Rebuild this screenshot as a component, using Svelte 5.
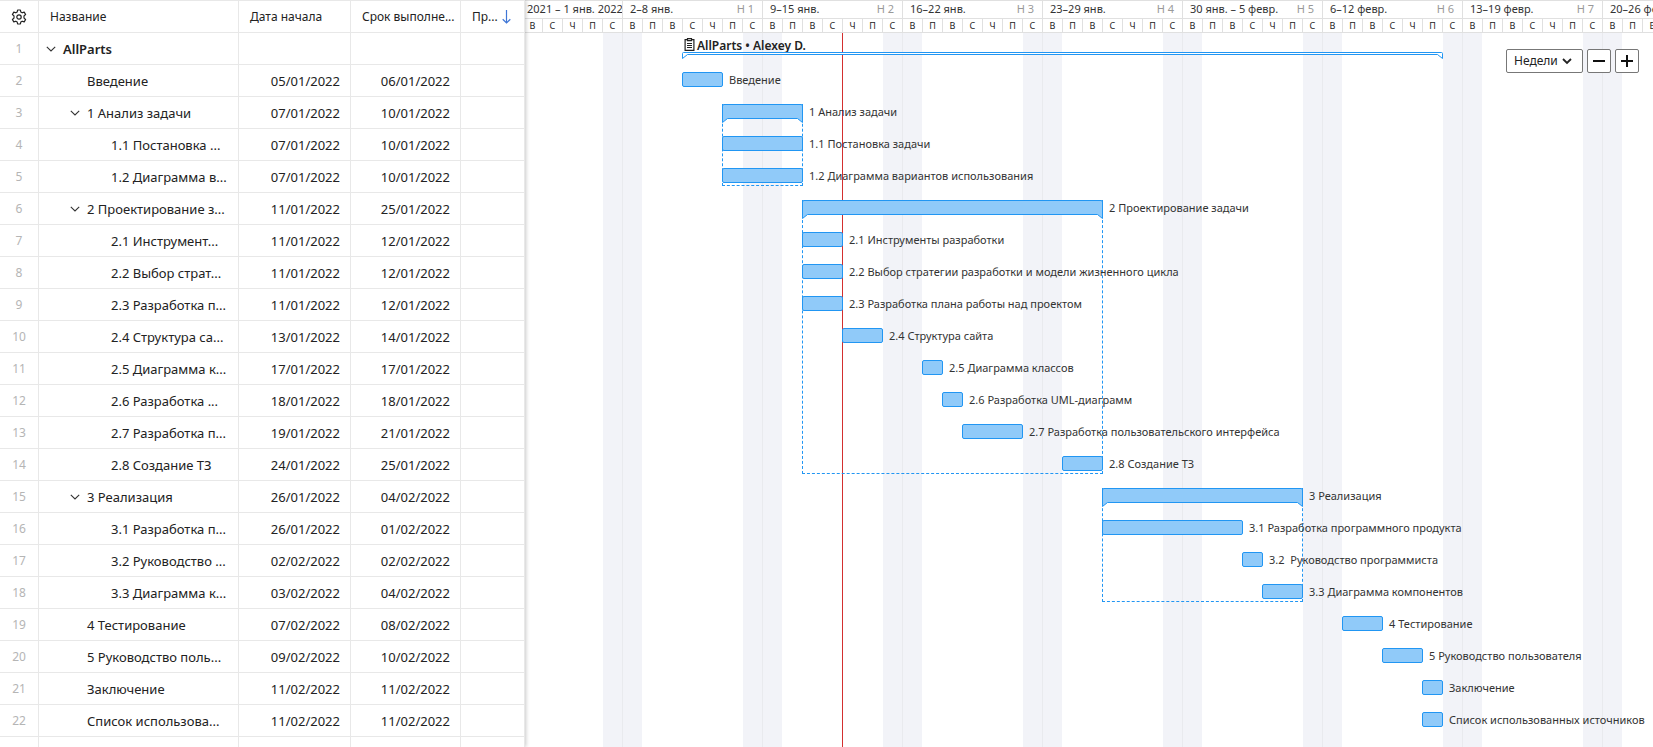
<script>
  const DAY = 20;

  const weeks = [
    { label: '2021 – 1 янв. 2022', number: '', days: 5 },
    { label: '2–8 янв.', number: 'Н 1', days: 7 },
    { label: '9–15 янв.', number: 'Н 2', days: 7 },
    { label: '16–22 янв.', number: 'Н 3', days: 7 },
    { label: '23–29 янв.', number: 'Н 4', days: 7 },
    { label: '30 янв. – 5 февр.', number: 'Н 5', days: 7 },
    { label: '6–12 февр.', number: 'Н 6', days: 7 },
    { label: '13–19 февр.', number: 'Н 7', days: 7 },
    { label: '20–26 февр.', number: 'Н 8', days: 7 }
  ];
  const letters = ['В', 'П', 'В', 'С', 'Ч', 'П', 'С'];
  const weekDays = (week) => letters.slice(7 - week.days);

  // start and span are counted in days from the left edge of the timeline
  const tasks = [
    { level: 0, name: 'AllParts', label: 'AllParts • Alexey D.', from: '', to: '', start: 8, span: 38, project: true, open: true },
    { level: 1, name: 'Введение', label: 'Введение', from: '05/01/2022', to: '06/01/2022', start: 8, span: 2 },
    { level: 1, name: '1 Анализ задачи', label: '1 Анализ задачи', from: '07/01/2022', to: '10/01/2022', start: 10, span: 4, children: 2, open: true },
    { level: 2, name: '1.1 Постановка ...', label: '1.1 Постановка задачи', from: '07/01/2022', to: '10/01/2022', start: 10, span: 4 },
    { level: 2, name: '1.2 Диаграмма в...', label: '1.2 Диаграмма вариантов использования', from: '07/01/2022', to: '10/01/2022', start: 10, span: 4 },
    { level: 1, name: '2 Проектирование з...', label: '2 Проектирование задачи', from: '11/01/2022', to: '25/01/2022', start: 14, span: 15, children: 8, open: true },
    { level: 2, name: '2.1 Инструмент...', label: '2.1 Инструменты разработки', from: '11/01/2022', to: '12/01/2022', start: 14, span: 2 },
    { level: 2, name: '2.2 Выбор страт...', label: '2.2 Выбор стратегии разработки и модели жизненного цикла', from: '11/01/2022', to: '12/01/2022', start: 14, span: 2 },
    { level: 2, name: '2.3 Разработка п...', label: '2.3 Разработка плана работы над проектом', from: '11/01/2022', to: '12/01/2022', start: 14, span: 2 },
    { level: 2, name: '2.4 Структура са...', label: '2.4 Структура сайта', from: '13/01/2022', to: '14/01/2022', start: 16, span: 2 },
    { level: 2, name: '2.5 Диаграмма к...', label: '2.5 Диаграмма классов', from: '17/01/2022', to: '17/01/2022', start: 20, span: 1 },
    { level: 2, name: '2.6 Разработка ...', label: '2.6 Разработка UML-диаграмм', from: '18/01/2022', to: '18/01/2022', start: 21, span: 1 },
    { level: 2, name: '2.7 Разработка п...', label: '2.7 Разработка пользовательского интерфейса', from: '19/01/2022', to: '21/01/2022', start: 22, span: 3 },
    { level: 2, name: '2.8 Создание ТЗ', label: '2.8 Создание ТЗ', from: '24/01/2022', to: '25/01/2022', start: 27, span: 2 },
    { level: 1, name: '3 Реализация', label: '3 Реализация', from: '26/01/2022', to: '04/02/2022', start: 29, span: 10, children: 3, open: true },
    { level: 2, name: '3.1 Разработка п...', label: '3.1 Разработка программного продукта', from: '26/01/2022', to: '01/02/2022', start: 29, span: 7 },
    { level: 2, name: '3.2 Руководство ...', label: '3.2  Руководство программиста', from: '02/02/2022', to: '02/02/2022', start: 36, span: 1 },
    { level: 2, name: '3.3 Диаграмма к...', label: '3.3 Диаграмма компонентов', from: '03/02/2022', to: '04/02/2022', start: 37, span: 2 },
    { level: 1, name: '4 Тестирование', label: '4 Тестирование', from: '07/02/2022', to: '08/02/2022', start: 41, span: 2 },
    { level: 1, name: '5 Руководство поль...', label: '5 Руководство пользователя', from: '09/02/2022', to: '10/02/2022', start: 43, span: 2 },
    { level: 1, name: 'Заключение', label: 'Заключение', from: '11/02/2022', to: '11/02/2022', start: 45, span: 1 },
    { level: 1, name: 'Список использова...', label: 'Список использованных источников', from: '11/02/2022', to: '11/02/2022', start: 45, span: 1 }
  ];

  const summaryPath = (w) =>
    `M.5 18.5V2Q.5 .5 2 .5H${w - 1}Q${w + 0.5} .5 ${w + 0.5} 2V18.5L${w - 4.5} 14.5H5.5Z`;
  const projectPath = (w) =>
    `M.5 6.5V1.5Q.5 .5 1.5 .5H${w - 0.5}Q${w + 0.5} .5 ${w + 0.5} 1.5V6.5L${w - 4.5} 2.5H5.5Z`;
</script>

<main class="gantt">
  <section class="sheet">
    <table>
      <colgroup>
        <col class="c-num" /><col class="c-name" /><col class="c-from" /><col class="c-to" /><col class="c-more" />
      </colgroup>
      <thead>
        <tr>
          <th class="gear">
            <button aria-label="Настройки">
              <svg width="16" height="16" viewBox="0 0 16 16" fill="none" stroke="#222" stroke-width="1.2" stroke-linejoin="round">
                <path d="M6.6 1h2.8l.4 2 1.4.8 2-.7 1.4 2.4-1.6 1.4v2.2l1.6 1.4-1.4 2.4-2-.7-1.4.8-.4 2H6.6l-.4-2-1.4-.8-2 .7-1.4-2.4L3 9.1V6.9L1.4 5.5l1.4-2.4 2 .7L6.2 3z" />
                <circle cx="8" cy="8" r="2.2" />
              </svg>
            </button>
          </th>
          <th>Название</th>
          <th>Дата начала</th>
          <th>Срок выполне...</th>
          <th>
            <div class="sorted">
              <span>Пр...</span>
              <svg width="9" height="14" viewBox="0 0 9 14" fill="none" stroke="#3f76d6" stroke-width="1.2"><path d="M4.5 0V13M.7 9.3l3.8 3.7 3.8-3.7" /></svg>
            </div>
          </th>
        </tr>
      </thead>
      <tbody>
        {#each tasks as task, i}
          <tr>
            <td class="num">{i + 1}</td>
            <td class="name level{task.level}" class:bold={task.project}>
              <div class="cell">
                <span class="toggle">
                  {#if task.open}
                    <button aria-label="Свернуть {task.name}">
                      <svg width="10" height="6" viewBox="0 0 10 6" fill="none" stroke="#333" stroke-width="1.1"><path d="M.8 .8L5 5 9.2 .8" /></svg>
                    </button>
                  {/if}
                </span>
                <span>{task.name}</span>
              </div>
            </td>
            <td class="date">{task.from}</td>
            <td class="date">{task.to}</td>
            <td></td>
          </tr>
        {/each}
        <tr><td></td><td></td><td></td><td></td><td></td></tr>
      </tbody>
    </table>
  </section>

  <section class="chart">
    <div class="timeline">
      <header class="scale">
        {#each weeks as week}
          <div class="week" style:width="{week.days * DAY}px">
            <div class="range"><span>{week.label}</span><span class="wn">{week.number}</span></div>
            <div class="days">
              {#each weekDays(week) as letter}<span>{letter}</span>{/each}
            </div>
          </div>
        {/each}
      </header>

      <div class="canvas">
        <div class="stripes">
          {#each weeks as week}
            <div class="stripe" style:width="{week.days * DAY}px"></div>
          {/each}
        </div>
        <div class="today" style:left="{16 * DAY}px"></div>

        {#each tasks as task}
          {@const w = task.span * DAY}
          <div class="lane">
            <div class="item" class:project={task.project} style:margin-left="{task.start * DAY}px">
              {#if task.project}
                <strong class="title">
                  <svg width="11" height="13" viewBox="0 0 11 13" fill="none" stroke="#222" stroke-width="1.2"><path d="M3.5 1.6H1.1V12.4H9.9V1.6H7.5M3.5 .6h4v2h-4zM3 5.5h5M3 7.5h5M3 9.5h5" /></svg>
                  <span>{task.label}</span>
                </strong>
                <svg class="span" width={w + 1} height="8"><path d={projectPath(w)} fill="#fff" stroke="#2196f3" /></svg>
              {:else}
                {#if task.children}
                  <div class="group" style:width="{w + 1}px" style:height="{task.children * 32 + 18}px"></div>
                  <svg class="bar" width={w + 1} height="20"><path d={summaryPath(w)} fill="#90caf9" stroke="#2196f3" /></svg>
                {:else}
                  <div class="bar box" style:width="{w + 1}px"></div>
                {/if}
                <span class="label">{task.label}</span>
              {/if}
            </div>
          </div>
        {/each}
      </div>
    </div>

    <div class="controls">
      <div class="pick">
        <select aria-label="Масштаб">
          <option>Недели</option>
          <option>Дни</option>
          <option>Месяцы</option>
        </select>
        <svg width="10" height="7" viewBox="0 0 10 7" fill="none" stroke="#222" stroke-width="1.8"><path d="M1 1l4 4 4-4" /></svg>
      </div>
      <button aria-label="Уменьшить"><svg width="12" height="12" viewBox="0 0 12 12" stroke="#111" stroke-width="2"><path d="M0 6h12" /></svg></button>
      <button aria-label="Увеличить"><svg width="12" height="12" viewBox="0 0 12 12" stroke="#111" stroke-width="2"><path d="M0 6h12M6 0v12" /></svg></button>
    </div>
  </section>
</main>

<style>
  :global(body) { margin: 0; background: #fff; overflow: hidden; }
  .gantt {
    display: flex;
    height: 100vh;
    overflow: hidden;
    color: #222;
    font: 13px/16px "Noto Sans", "Open Sans", sans-serif;
  }
  .sheet { flex: none; z-index: 1; background: #fff; box-shadow: 1px 0 4px rgba(0, 0, 0, .22); }
  table { width: 525px; table-layout: fixed; border-collapse: separate; border-spacing: 0; }
  .c-num { width: 39px; }
  .c-name { width: 200px; }
  .c-from { width: 112px; }
  .c-to { width: 110px; }
  .c-more { width: 64px; }
  th, td {
    box-sizing: border-box;
    height: 32px;
    padding: 0;
    border: solid #e8e8e8;
    border-width: 0 1px 1px 0;
    white-space: nowrap;
    overflow: hidden;
  }
  th { height: 33px; padding-left: 11px; border-top-width: 1px; font-size: 12px; font-weight: 400; text-align: left; }
  button { padding: 0; border: 0; background: none; display: flex; align-items: center; justify-content: center; }
  svg { display: block; flex: none; }
  .gear { padding: 0; }
  .gear button { margin-left: 11px; }
  .sorted { display: flex; align-items: center; gap: 4px; }
  .num { color: #b5b5b5; text-align: center; font-size: 12px; }
  .cell { display: flex; align-items: center; }
  .toggle { flex: none; width: 17px; }
  .level0 { padding-left: 7px; }
  .level1 { padding-left: 31px; }
  .level2 { padding-left: 55px; }
  .bold { font-weight: 600; }
  .date { padding-right: 10px; text-align: right; }

  .chart { position: relative; flex: 1; min-width: 0; overflow: hidden; }
  .timeline { display: flex; flex-direction: column; height: 100%; width: max-content; margin-left: -3px; }
  .scale { display: flex; box-sizing: border-box; height: 33px; border: solid #e0e0e0; border-width: 1px 0; }
  .week { flex: none; }
  .range {
    display: flex;
    justify-content: space-between;
    box-sizing: border-box;
    height: 18px;
    padding: 0 8px 0 7px;
    border: solid #e0e0e0;
    border-width: 0 0 1px 1px;
    font-size: 11px;
    line-height: 16px;
    white-space: nowrap;
    color: #333;
  }
  .week:first-child .range { padding: 0 0 0 4px; }
  .wn { color: #999; }
  .days { display: flex; }
  .days span {
    box-sizing: border-box;
    width: 20px;
    border-left: 1px solid #e0e0e0;
    font-size: 9px;
    line-height: 13px;
    text-align: center;
  }
  .canvas { position: relative; flex: 1; }
  .stripes { position: absolute; inset: 0; display: flex; }
  .stripe {
    box-sizing: border-box;
    flex: none;
    border-left: 1px solid #e9eaee;
    background: linear-gradient(90deg, #f2f3f8 19px, transparent 19px calc(100% - 19px), #f2f3f8 calc(100% - 19px));
  }
  .stripe:first-child { background: linear-gradient(90deg, transparent calc(100% - 19px), #f2f3f8 calc(100% - 19px)); }
  .today { position: absolute; top: 0; bottom: 0; width: 1px; background: #d32f2f; }
  .lane { position: relative; height: 32px; }
  .item { position: relative; display: flex; gap: 6px; padding-top: 7px; width: max-content; }
  .bar { position: relative; margin-bottom: -5px; }
  .box { box-sizing: border-box; height: 15px; border: 1px solid #2196f3; border-radius: 2px; background: #90caf9; }
  .group { position: absolute; left: 0; top: 7px; box-sizing: border-box; border: 1px dashed #2196f3; border-top: 0; }
  .label { font-size: 11px; line-height: 16px; white-space: pre; color: #333; }
  .project { flex-direction: column; gap: 0; padding-top: 5px; }
  .title { display: flex; gap: 2px; padding-left: 2px; height: 14px; font-size: 12px; line-height: 16px; font-weight: 600; white-space: nowrap; }

  .controls { position: absolute; top: 49px; right: 14px; display: flex; gap: 4px; }
  .controls button, .controls select {
    box-sizing: border-box;
    width: 24px;
    height: 24px;
    border: 1px solid #777;
    border-radius: 2px;
    background: #fff;
  }
  .pick { position: relative; }
  .controls select { width: 77px; padding: 0 7px; appearance: none; font: 12px/16px "Noto Sans", sans-serif; color: #222; }
  .pick svg { position: absolute; right: 11px; top: 9px; pointer-events: none; }
</style>
